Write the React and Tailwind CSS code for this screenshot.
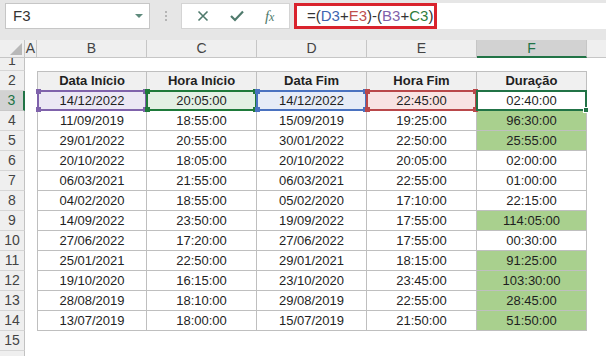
import React from "react";

const data = [
  ["14/12/2022", "20:05:00", "14/12/2022", "22:45:00", "02:40:00", false],
  ["11/09/2019", "18:55:00", "15/09/2019", "19:25:00", "96:30:00", true],
  ["29/01/2022", "20:55:00", "30/01/2022", "22:50:00", "25:55:00", true],
  ["20/10/2022", "18:05:00", "20/10/2022", "20:05:00", "02:00:00", false],
  ["06/03/2021", "21:55:00", "06/03/2021", "22:55:00", "01:00:00", false],
  ["04/02/2020", "18:55:00", "05/02/2020", "17:10:00", "22:15:00", false],
  ["14/09/2022", "23:50:00", "19/09/2022", "17:55:00", "114:05:00", true],
  ["27/06/2022", "17:20:00", "27/06/2022", "17:55:00", "00:30:00", false],
  ["25/01/2021", "22:50:00", "29/01/2021", "18:15:00", "91:25:00", true],
  ["19/10/2020", "16:15:00", "23/10/2020", "23:45:00", "103:30:00", true],
  ["28/08/2019", "18:10:00", "29/08/2019", "22:55:00", "28:45:00", true],
  ["13/07/2019", "18:00:00", "15/07/2019", "21:50:00", "51:50:00", true],
];

function RowHeader({ num, selected, clip }) {
  if (selected) {
    return (
      <div className="w-[25px] shrink-0 bg-[#d2d2d2] border-r-2 border-r-[#217346] border-b border-b-[#c8c8c8] flex items-center justify-center text-[14px] text-[#217346]">
        {num}
      </div>
    );
  }
  return (
    <div
      className={
        "w-[25px] shrink-0 bg-[#efefef] border-r border-r-[#c2c2c2] border-b border-b-[#d6d6d6] flex justify-center text-[14px] text-[#444] overflow-hidden " +
        (clip ? "items-end" : "items-center")
      }
    >
      {clip ? <span className="leading-[20px] block">{num}</span> : num}
    </div>
  );
}

function Handle({ pos, color }) {
  const p = {
    tl: "-top-[3px] -left-[3px]",
    tr: "-top-[3px] -right-[3px]",
    bl: "-bottom-[3px] -left-[3px]",
    br: "-bottom-[3px] -right-[3px]",
  }[pos];
  return <span className={"absolute w-[5px] h-[5px] " + p + " " + color} />;
}

function RefCell({ text, fill, border, handle, first }) {
  return (
    <div
      className={
        "relative w-[110px] shrink-0 h-full flex items-center justify-center border-r border-b border-[#bfbfbf] " +
        fill +
        (first ? " border-l" : "")
      }
    >
      {text}
      <div className={"absolute -top-px -bottom-px -left-px -right-px border-2 " + border}>
        <Handle pos="tl" color={handle} />
        <Handle pos="tr" color={handle} />
        <Handle pos="bl" color={handle} />
        <Handle pos="br" color={handle} />
      </div>
    </div>
  );
}

function Cell({ text, first, green, header }) {
  return (
    <div
      className={
        "w-[110px] shrink-0 h-full flex items-center justify-center border-r border-b border-[#bfbfbf] " +
        (first ? "border-l " : "") +
        (header ? "border-t bg-[#f0f0f0] font-bold " : "") +
        (green ? "bg-[#a9d08e]" : "")
      }
    >
      {text}
    </div>
  );
}

function ColHeader({ label, w, selected }) {
  return (
    <div
      className={
        "shrink-0 h-full flex items-center justify-center text-[14px] border-r border-r-[#c6c6c6] " +
        w +
        (selected
          ? " bg-[#d2d2d2] text-[#217346] border-b-2 border-b-[#217346]"
          : " bg-[#efefef] text-[#444] border-b border-b-[#c6c6c6]")
      }
    >
      {label}
    </div>
  );
}

export default function App() {
  return (
    <div
      className="w-[606px] h-[356px] overflow-hidden bg-white text-[#1f1f1f] text-[13px]"
      style={{ fontFamily: '"Liberation Sans", Arial, sans-serif' }}
    >
      {/* Formula bar */}
      <div className="h-[40px] bg-[#e6e6e6] flex items-start pt-[3px] pl-[5px]">
        <div className="w-[145px] h-[26px] bg-white border border-[#c6c6c6] flex items-center pl-[7px] pr-[6px] justify-between">
          <span className="text-[15px] text-[#333]">F3</span>
          <svg width="8" height="4" viewBox="0 0 8 4">
            <polygon points="0,0 8,0 4,4" fill="#5e8a7c" />
          </svg>
        </div>
        <div className="w-[31px] h-[26px] flex flex-col items-center justify-center gap-[2px]">
          <span className="w-[2px] h-[2px] bg-[#b5b5b5]" />
          <span className="w-[2px] h-[2px] bg-[#b5b5b5]" />
          <span className="w-[2px] h-[2px] bg-[#b5b5b5]" />
        </div>
        <div className="w-[109px] h-[26px] bg-white border border-[#d4d4d4] flex items-center justify-around px-[4px]">
          <svg width="12" height="12" viewBox="0 0 12 12">
            <path d="M1.5 1.5 L10.5 10.5 M10.5 1.5 L1.5 10.5" stroke="#4f7a6c" strokeWidth="1.6" fill="none" />
          </svg>
          <svg width="14" height="12" viewBox="0 0 14 12">
            <path d="M1 6 L5 10 L13 1.5" stroke="#4f7a6c" strokeWidth="2.2" fill="none" />
          </svg>
          <span
            className="italic text-[15px] text-[#4f7a6c] leading-none"
            style={{ fontFamily: '"Liberation Serif", serif' }}
          >
            f<span className="text-[12px]">x</span>
          </span>
        </div>
        <div className="ml-[4px] flex-1 h-[26px] bg-white flex items-stretch">
          <div className="w-[143px] border-[3px] border-[#d9232d] flex items-center pl-[10px] text-[15px] text-[#333] whitespace-nowrap">
            <span>=(</span>
            <span className="text-[#3e64b0]">D3</span>
            <span>+</span>
            <span className="text-[#c0504d]">E3</span>
            <span>)-(</span>
            <span className="text-[#7f62ab]">B3</span>
            <span>+</span>
            <span className="text-[#2e7d3c]">C3</span>
            <span>)</span>
          </div>
        </div>
      </div>

      {/* Column headers */}
      <div className="h-[18px] flex">
        <div className="w-[25px] shrink-0 h-full bg-[#efefef] border-r border-b border-[#c6c6c6] flex items-end justify-end pr-[2px] pb-[2px]">
          <svg width="12" height="12" viewBox="0 0 12 12">
            <polygon points="12,0 12,12 0,12" fill="#b8b8b8" />
          </svg>
        </div>
        <ColHeader label="A" w="w-[12px]" />
        <ColHeader label="B" w="w-[110px]" />
        <ColHeader label="C" w="w-[110px]" />
        <ColHeader label="D" w="w-[110px]" />
        <ColHeader label="E" w="w-[110px]" />
        <ColHeader label="F" w="w-[110px]" selected />
        <div className="flex-1 h-full bg-[#efefef] border-b border-b-[#c6c6c6]" />
      </div>

      {/* Row 1 */}
      <div className="h-[13px] flex">
        <RowHeader num="1" clip />
        <div className="flex-1" />
      </div>

      {/* Row 2 header */}
      <div className="h-[20px] flex">
        <RowHeader num="2" />
        <div className="w-[12px] shrink-0" />
        <Cell text="Data Início" header first />
        <Cell text="Hora Início" header />
        <Cell text="Data Fim" header />
        <Cell text="Hora Fim" header />
        <Cell text="Duração" header />
        <div className="flex-1" />
      </div>

      {/* Row 3 highlighted */}
      <div className="h-[20px] flex">
        <RowHeader num="3" selected />
        <div className="w-[12px] shrink-0" />
        <RefCell text={data[0][0]} first fill="bg-[#ebe7f4]" border="border-[#7f62ab]" handle="bg-[#7f62ab]" />
        <RefCell text={data[0][1]} fill="bg-[#e3f0e4]" border="border-[#1e7a3a]" handle="bg-[#1e7a3a]" />
        <RefCell text={data[0][2]} fill="bg-[#e6ecf7]" border="border-[#4a72c0]" handle="bg-[#4a72c0]" />
        <RefCell text={data[0][3]} fill="bg-[#f8e3e3]" border="border-[#b9474a]" handle="bg-[#b9474a]" />
        <div className="relative w-[110px] shrink-0 h-full flex items-center justify-center border-r border-b border-[#bfbfbf] bg-white">
          {data[0][4]}
          <div className="absolute -top-px -bottom-px -left-px -right-px border-2 border-[#217346]">
            <span className="absolute -bottom-[4px] -right-[4px] w-[6px] h-[6px] bg-[#217346] border border-white" />
          </div>
        </div>
        <div className="flex-1" />
      </div>

      {data.slice(1).map((r, i) => (
        <div key={i} className="h-[20px] flex">
          <RowHeader num={String(i + 4)} />
          <div className="w-[12px] shrink-0" />
          <Cell text={r[0]} first />
          <Cell text={r[1]} />
          <Cell text={r[2]} />
          <Cell text={r[3]} />
          <Cell text={r[4]} green={r[5]} />
          <div className="flex-1" />
        </div>
      ))}

      <div className="h-[20px] flex">
        <RowHeader num="15" />
        <div className="flex-1" />
      </div>
      <div className="h-[20px] flex">
        <RowHeader num="" />
        <div className="flex-1" />
      </div>
    </div>
  );
}
